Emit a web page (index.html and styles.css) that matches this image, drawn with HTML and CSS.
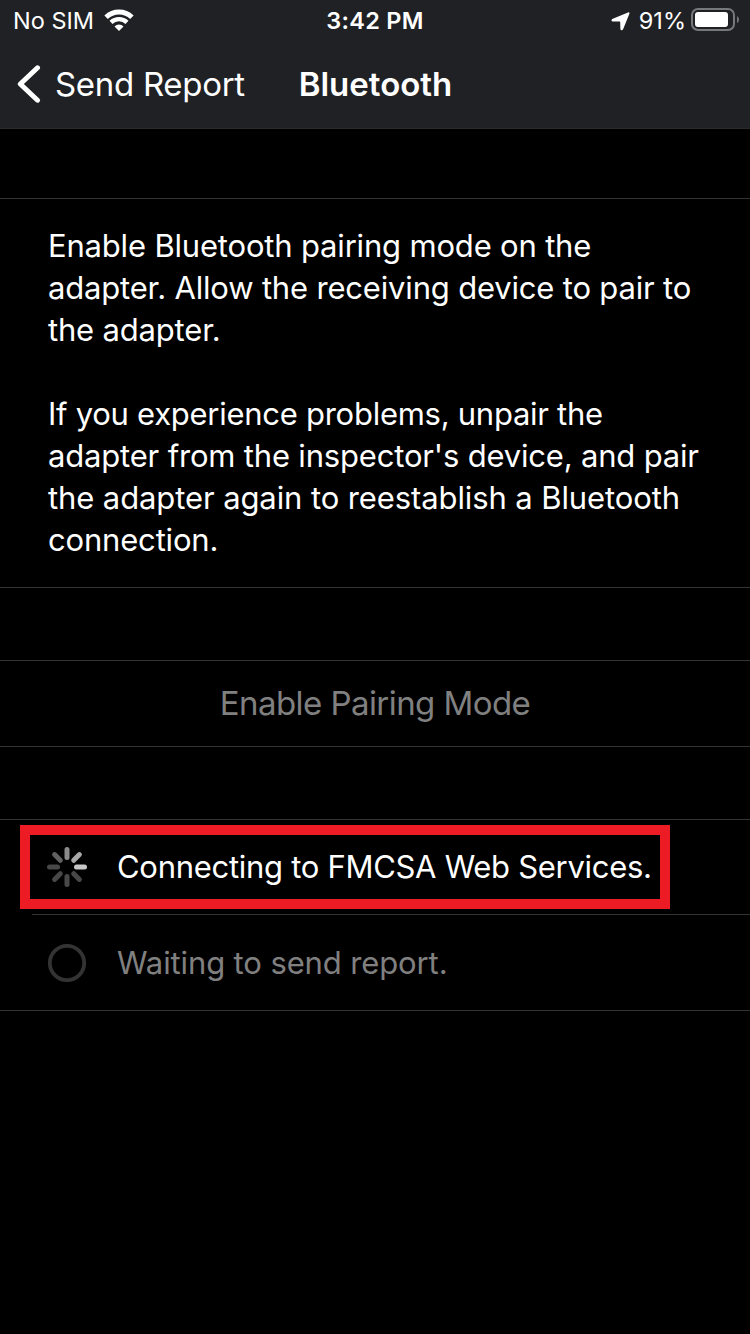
FILE: index.html
```
<!DOCTYPE html>
<html lang="en">
<head>
  <meta charset="UTF-8" />
  <title>Bluetooth</title>
  <link rel="stylesheet" href="styles.css">
</head>
<body>

  <header class="header">
    <!-- Status bar -->
    <div class="status-bar">
      <div class="status-left">
        <span class="carrier">No SIM</span>
        <svg class="wifi" width="30" height="22" viewBox="0 0 30 22">
          <path d="M2.1 8.3 A18.6 18.6 0 0 1 27.9 8.3" fill="none" stroke="#fff" stroke-width="5"/>
          <path d="M7 13.3 A11.8 11.8 0 0 1 23 13.3" fill="none" stroke="#fff" stroke-width="4.4"/>
          <path d="M15 22 L10.5 17.4 A6.4 6.4 0 0 1 19.5 17.4 Z" fill="#fff"/>
        </svg>
      </div>
      <span class="clock">3:42 PM</span>
      <div class="status-right">
        <svg class="location" width="19" height="19" viewBox="0 0 19 19">
          <path d="M17 .4 Q19 -.1 18.3 1.9 L12.2 17 Q11.6 18.4 10.4 18.3 Q9.5 18.2 9.4 17 L9.2 10.1 Q9.2 9.6 8.7 9.6 L1.8 9.5 Q.6 9.4 .5 8.5 Q.4 7.4 1.8 6.8 Z" fill="#fff"/>
        </svg>
        <span class="percent">91%</span>
        <svg class="battery" width="48" height="24" viewBox="0 0 48 24">
          <rect x="1" y="1" width="42" height="21" rx="6" fill="none" stroke="#77787a" stroke-width="2"/>
          <rect x="4" y="4" width="33" height="15" rx="3" fill="#fff"/>
          <path d="M46 8 Q48 9 48 11.5 Q48 14 46 15 Z" fill="#77787a"/>
        </svg>
      </div>
    </div>

    <!-- Navigation -->
    <nav class="nav">
      <a class="back">
        <svg width="24" height="38" viewBox="0 0 24 38">
          <path d="M20.5 2.8 L3.3 19 L20.5 35.2" fill="none" stroke="#fff" stroke-width="5" stroke-linecap="round" stroke-linejoin="round"/>
        </svg>
        <span>Send Report</span>
      </a>
      <h1>Bluetooth</h1>
    </nav>
  </header>

  <main>
    <section class="group info">
      <p>Enable Bluetooth pairing mode on the<br>adapter. Allow the receiving device to pair to<br>the adapter.</p>
      <p><span class="tight">If you experience problems, unpair the</span><br>adapter from the inspector's device, and pair<br><span class="loose">the adapter again to reestablish a Bluetooth</span><br>connection.</p>
    </section>

    <section class="group">
      <button class="pairing" disabled>Enable Pairing Mode</button>
    </section>

    <section class="group steps">
      <div class="step active">
        <svg width="40" height="40" viewBox="-20 -20 40 40" stroke-width="5" stroke-linecap="round">
          <path d="M0 -9.5V-17.5" stroke="#8a8a8a"/>
          <path d="M6.7 -6.7L12.4 -12.4" stroke="#a8a8a8"/>
          <path d="M9.5 0H17.5" stroke="#c6c6c6"/>
          <path d="M6.7 6.7L12.4 12.4" stroke="#484848"/>
          <path d="M0 9.5V17.5" stroke="#484848"/>
          <path d="M-6.7 6.7L-12.4 12.4" stroke="#484848"/>
          <path d="M-9.5 0H-17.5" stroke="#484848"/>
          <path d="M-6.7 -6.7L-12.4 -12.4" stroke="#616161"/>
        </svg>
        <span>Connecting to FMCSA Web Services.</span>
      </div>
      <div class="step waiting">
        <svg width="40" height="40" viewBox="-20 -20 40 40">
          <circle r="17.2" fill="none" stroke="#333" stroke-width="3.8"/>
        </svg>
        <span>Waiting to send report.</span>
      </div>
      <div class="highlight"></div>
    </section>
  </main>

</body>
</html>
```

FILE: styles.css
```
* {
  box-sizing: border-box;
}

html, body {
  margin: 0;
  padding: 0;
  background: #000;
  color: #fff;
  font-family: Inter, 'Liberation Sans', sans-serif;
  overflow: hidden;
}

svg {
  display: block;
  flex: none;
}

.header {
  height: 129px;
  background: #202124;
  border-bottom: 1px solid #2b2b2d;
}

.status-bar {
  display: grid;
  grid-template-columns: 1fr auto 1fr;
  align-items: center;
  height: 40px;
  padding: 0 11px 0 13px;
  font-size: 23.5px;
  line-height: 38px;
}

.status-bar span {
  padding-top: 2px;
}

.status-left,
.status-right {
  display: flex;
  align-items: center;
}

.status-left {
  gap: 10px;
}

.status-right {
  justify-content: flex-end;
}

.clock {
  margin-right: 2px;
  font-weight: 600;
  letter-spacing: 0.3px;
}

.location {
  margin-top: 2px;
}

.percent {
  margin: 0 5px 0 9px;
}

.nav {
  display: grid;
  grid-template-columns: 1fr auto 1fr;
  align-items: center;
  height: 88px;
  padding: 0 17px;
}

.back {
  display: flex;
  align-items: center;
  gap: 14px;
  font-size: 33px;
  letter-spacing: -0.3px;
}

h1 {
  margin: 0 0 0 1px;
  font-size: 33px;
  font-weight: 600;
}

main {
  padding-top: 69px;
}

.group {
  position: relative;
  margin-bottom: 72px;
  border-top: 1px solid #333;
  border-bottom: 1px solid #333;
}

.info {
  padding: 26px 48px;
}

.info p {
  margin: 0 0 42px;
  font-size: 31px;
  line-height: 42px;
  letter-spacing: -0.18px;
  white-space: nowrap;
}

.info p:last-child {
  margin-bottom: 0;
}

.info .tight {
  letter-spacing: -0.27px;
}

.info .loose {
  letter-spacing: -0.1px;
}

.pairing {
  display: block;
  width: 100%;
  height: 85px;
  padding: 0 0 2px;
  border: 0;
  background: none;
  color: #808080;
  font-family: inherit;
  font-size: 33px;
  letter-spacing: -0.56px;
}

.step {
  display: flex;
  align-items: center;
  gap: 30px;
  height: 94px;
  padding-left: 47px;
  font-size: 31px;
}

.active span {
  padding-bottom: 2px;
  letter-spacing: -0.29px;
}

.waiting {
  height: 96px;
  margin-left: 32px;
  padding-left: 15px;
  border-top: 1px solid #333;
  color: #808080;
  letter-spacing: -0.12px;
}

/* callout drawn over the active step */
.highlight {
  position: absolute;
  top: 5px;
  left: 20px;
  width: 650px;
  height: 84px;
  border: 10px solid #ed1c24;
}
```
